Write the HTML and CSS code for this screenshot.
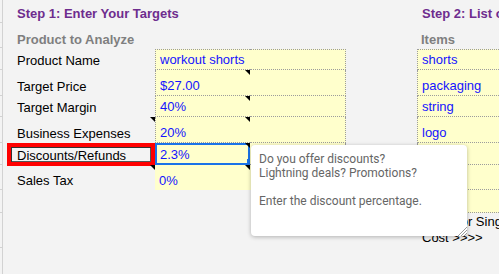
FILE: index.html
```html
<!DOCTYPE html>
<html>
<head>
<meta charset="utf-8">
<link rel="stylesheet" href="styles.css">
</head>
<body>
<div class="page">
  <div class="gutter">
    <div class="tick h23"></div>
    <div class="tick h25"></div>
    <div class="tick h22"></div>
    <div class="tick h26"></div>
    <div class="tick h21"></div>
    <div class="tick h26"></div>
    <div class="tick h22"></div>
    <div class="tick h25"></div>
    <div class="tick h23"></div>
    <div class="tick h35"></div>
  </div>
  <div class="sheet">
    <div class="title span-abc">Step 1: Enter Your Targets</div>
    <div class="empty"></div>
    <div class="title title-e">Step 2: List of Items</div>

    <div class="sub span-abc">Product to Analyze</div>
    <div class="empty"></div>
    <div class="sub sub-e">Items</div>

    <div class="label">Product Name</div>
    <div class="val b first">workout shorts</div>
    <div class="val c first"></div>
    <div class="empty"></div>
    <div class="val e first">shorts</div>

    <div class="label">Target Price</div>
    <div class="val b note">$27.00</div>
    <div class="val c"></div>
    <div class="empty"></div>
    <div class="val e">packaging</div>

    <div class="label">Target Margin</div>
    <div class="val b note">40%</div>
    <div class="val c"></div>
    <div class="empty"></div>
    <div class="val e">string</div>

    <div class="label note">Business Expenses</div>
    <div class="val b note">20%</div>
    <div class="val c"></div>
    <div class="empty"></div>
    <div class="val e">logo</div>

    <div class="label boxed">Discounts/Refunds</div>
    <div class="val b note selected">2.3%</div>
    <div class="val c"></div>
    <div class="empty"></div>
    <div class="val e"></div>

    <div class="label note">Sales Tax</div>
    <div class="val b plain note">0%</div>
    <div class="val c plain"></div>
    <div class="empty"></div>
    <div class="val e"></div>

    <div class="empty span-abcd"></div>
    <div class="val e"></div>

    <div class="empty span-abcd"></div>
    <div class="total">
      <div class="total-line first-line">Total for Single Unit</div>
      <div class="total-line">Cost &gt;&gt;&gt;&gt;</div>
    </div>

    <div class="tooltip">
      <p>Do you offer discounts?<br>Lightning deals? Promotions?</p>
      <p>Enter the discount percentage.</p>
      <svg class="grip" width="11" height="11" viewBox="0 0 11 11">
        <line x1="1" y1="10" x2="10" y2="1" stroke="#9a9a9a" stroke-width="1"/>
        <line x1="4" y1="10" x2="10" y2="4" stroke="#9a9a9a" stroke-width="1"/>
        <line x1="7" y1="10" x2="10" y2="7" stroke="#9a9a9a" stroke-width="1"/>
      </svg>
    </div>
  </div>
</div>
</body>
</html>
```

FILE: styles.css
```css
html, body {
  margin: 0;
  padding: 0;
  background: #f3f3f3;
  overflow: hidden;
}

body {
  width: 499px;
  height: 274px;
  font-family: "Liberation Sans", Arial, sans-serif;
  font-size: 13px;
  color: #000;
}

.page {
  display: flex;
  height: 274px;
  width: 499px;
  overflow: hidden;
}

.gutter {
  width: 2px;
  border-right: 1px solid #d2d2d2;
  display: flex;
  flex-direction: column;
  flex: none;
}

.tick {
  box-sizing: border-box;
  border-bottom: 1px solid #d2d2d2;
}

.h21 { height: 21px; }
.h22 { height: 22px; }
.h23 { height: 23px; }
.h25 { height: 25px; }
.h26 { height: 26px; }
.h35 { height: 35px; }

.sheet {
  position: relative;
  display: grid;
  grid-template-columns: 152px 95px 96px 71px 82px;
  grid-template-rows: 27px 22px 21px 26px 21px 26px 22px 25px 23px 35px;
  flex: none;
}

.sheet > div {
  box-sizing: border-box;
  min-width: 0;
}

.span-abc { grid-column: span 3; }
.span-abcd { grid-column: span 4; }

.title {
  display: flex;
  align-items: center;
  padding-left: 14px;
  font-weight: bold;
  color: #6e2d8e;
  white-space: nowrap;
  overflow: hidden;
}

.title-e { padding-left: 5px; }

.sub {
  display: flex;
  align-items: flex-end;
  padding-left: 14px;
  padding-bottom: 2px;
  line-height: 15px;
  font-weight: bold;
  color: #7f7f7f;
  white-space: nowrap;
}

.sub-e { padding-left: 4px; }

.label {
  position: relative;
  display: flex;
  align-items: flex-end;
  padding-left: 14px;
  padding-bottom: 2px;
  line-height: 15px;
  white-space: nowrap;
}

.val {
  position: relative;
  display: flex;
  align-items: flex-end;
  padding-left: 4px;
  padding-bottom: 2px;
  line-height: 15px;
  background: #ffffcc;
  color: #1414ff;
  white-space: nowrap;
  border-bottom: 1px dotted #9c9c9c;
}

.val.b { border-left: 1px dotted #9c9c9c; }
.val.c { border-right: 1px dotted #9c9c9c; }
.val.e { border-left: 1px dotted #9c9c9c; }
.val.first { border-top: 1px dotted #9c9c9c; }
.val.plain { border: none; }

.note::after {
  content: "";
  position: absolute;
  top: 0;
  right: 0;
  width: 0;
  height: 0;
  border-top: 5px solid #000;
  border-left: 5px solid transparent;
}

.selected {
  outline: 2px solid #1a73e8;
  outline-offset: -2px;
}

.selected::before {
  content: "";
  position: absolute;
  right: -1px;
  bottom: 0;
  width: 4px;
  height: 5px;
  background: #1a73e8;
}

.boxed::before {
  content: "";
  position: absolute;
  left: 4px;
  top: 0;
  right: 0;
  bottom: -1px;
  border: 4px solid #ff0000;
  box-shadow: inset 1px 1px 0 #333, inset -1px -1px 0 #555;
}

.total {
  padding-left: 5px;
  padding-top: 1px;
  line-height: 16px;
  white-space: nowrap;
  color: #000;
  overflow: hidden;
}

.first-line {
  padding-left: 4px;
}

.tooltip {
  position: absolute;
  left: 248px;
  top: 145px;
  width: 216px;
  height: 91px;
  box-sizing: border-box;
  padding: 7px 8px;
  background: #fff;
  border-radius: 4px;
  box-shadow: 0 1px 4px rgba(0, 0, 0, 0.28);
  font-family: Roboto, "Liberation Sans", sans-serif;
  font-size: 12px;
  line-height: 14px;
  color: #666;
  z-index: 2;
}

.tooltip p {
  margin: 0 0 14px 0;
}

.grip {
  position: absolute;
  right: -1px;
  bottom: -1px;
}
```
